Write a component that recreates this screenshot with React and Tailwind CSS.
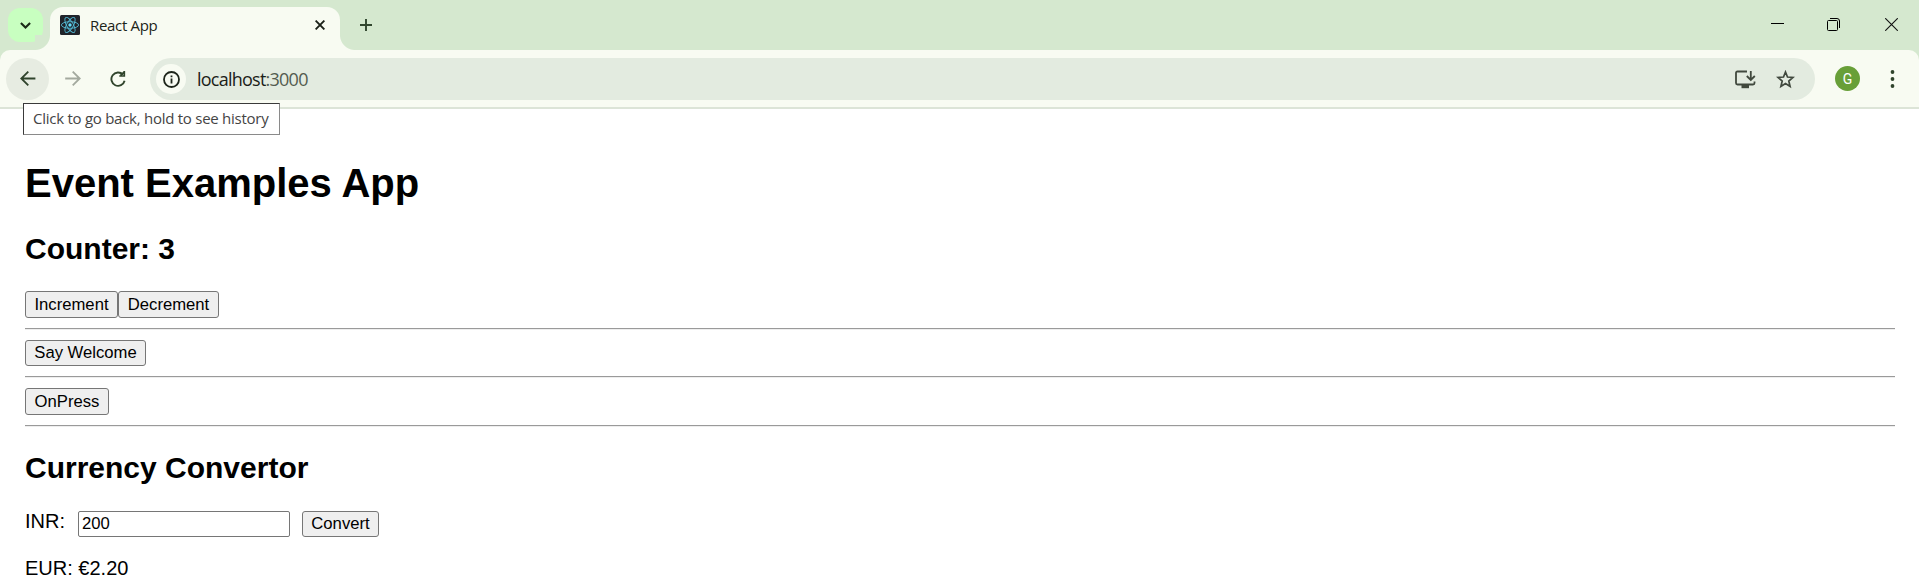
import { useState } from "react";

const btn =
  "box-border rounded-[3px] border border-[#767676] bg-[#efefef] text-center text-[16.667px] leading-[22px] text-black whitespace-nowrap";

function ReactLogo() {
  return (
    <svg className="size-5 shrink-0" viewBox="0 0 20 20" fill="none">
      <rect width="20" height="20" rx="1.5" fill="#20232a" />
      <g stroke="#53bad5" strokeWidth="0.9">
        <ellipse cx="10" cy="10" rx="8.6" ry="3.3" />
        <ellipse cx="10" cy="10" rx="8.6" ry="3.3" transform="rotate(60 10 10)" />
        <ellipse cx="10" cy="10" rx="8.6" ry="3.3" transform="rotate(120 10 10)" />
      </g>
      <circle cx="10" cy="10" r="1.7" fill="#61dafb" />
    </svg>
  );
}

function TabStrip() {
  return (
    <div className="flex h-[50px] items-start bg-[#d5e8cf]">
      <div className="ml-2 mt-2 flex h-[34px] w-[35px] items-center justify-center rounded-[12px] bg-[#c8ffc0]">
        <svg className="size-[11px]" viewBox="0 0 11 11" fill="none" stroke="#1a2b17" strokeWidth="2.1">
          <path d="M0.9 3 L5.5 7.6 L10.1 3" />
        </svg>
      </div>
      <div className="relative ml-[7px] mt-[7px] flex h-[43px] w-[290px] items-center rounded-t-[13px] bg-[#f8fbf2] pl-[10px] pb-[7px]">
        <span className="absolute bottom-0 -left-[15px] size-[15px] bg-[radial-gradient(circle_at_0_0,#d5e8cf_14.5px,#f8fbf2_15.5px)]" />
        <span className="absolute bottom-0 -right-[15px] size-[15px] bg-[radial-gradient(circle_at_100%_0,#d5e8cf_14.5px,#f8fbf2_15.5px)]" />
        <ReactLogo />
        <span className="ml-[10px] -mt-[1px] text-[15px] leading-5 tracking-[-0.32px] text-[#1c2419]">React App</span>
        <svg className="ml-auto mr-[15px] size-[10px]" viewBox="0 0 10 10" stroke="#1a2018" strokeWidth="1.9">
          <path d="M0.6 0.6 L9.4 9.4 M9.4 0.6 L0.6 9.4" />
        </svg>
      </div>
      <svg className="ml-[20px] mt-[19px] size-[12px]" viewBox="0 0 12 12" stroke="#31462e" strokeWidth="1.9">
        <path d="M6 0 V12 M0 6 H12" />
      </svg>
      <div className="ml-auto mr-[21px] mt-[18px] flex items-start">
        <svg className="h-[13px] w-[13px]" viewBox="0 0 13 13" stroke="#000" strokeWidth="1">
          <path d="M0 5.5 H13" />
        </svg>
        <svg className="ml-[43px] size-[13px]" viewBox="0 0 13 13" fill="none" stroke="#000" strokeWidth="1">
          <rect x="0.5" y="2.5" width="10" height="10" rx="1" />
          <path d="M3 0.5 H10 Q12.5 0.5 12.5 3 V10" />
        </svg>
        <svg className="ml-[45px] size-[13px]" viewBox="0 0 13 13" stroke="#111" strokeWidth="1.1">
          <path d="M0.2 0.2 L12.8 12.8 M12.8 0.2 L0.2 12.8" />
        </svg>
      </div>
    </div>
  );
}

function Toolbar() {
  return (
    <div className="bg-[#d5e8cf]">
      <div className="relative flex h-[59px] items-start rounded-t-[10px] border-b-2 border-[#dce4d7] bg-[#f8fbf2] pt-2">
        <div className="ml-[6px] flex h-[42px] w-[43px] shrink-0 items-center justify-center rounded-full bg-[#e7ece2]">
          <svg className="size-4" viewBox="0 0 16 16" fill="none" stroke="#30442c" strokeWidth="1.8">
            <path d="M15.4 7.5 H2 M8.3 0.6 L1.3 7.5 L8.3 14.4" />
          </svg>
        </div>
        <svg className="ml-[16px] mt-[13px] size-4 shrink-0" viewBox="0 0 16 16" fill="none" stroke="#a3a99e" strokeWidth="1.8">
          <path d="M0.2 7.5 H14 M7.7 0.6 L14.7 7.5 L7.7 14.4" />
        </svg>
        <svg className="ml-[29px] mt-[12px] size-[17px] shrink-0" viewBox="0 0 17 17" fill="none">
          <path d="M13 4.6 A6.7 6.7 0 1 0 14.6 10.8" stroke="#30442c" strokeWidth="1.9" />
          <path d="M14.3 1 V6 H9.3 M10.6 5.4 L14 2" stroke="#30442c" strokeWidth="1.7" />
        </svg>
        <div className="ml-[23px] flex h-[42px] w-[1665px] shrink-0 items-center rounded-full bg-[#e3ebe0] pl-[6px]">
          <div className="flex size-[30px] items-center justify-center rounded-full bg-[#f8fbf2]">
            <svg className="size-[17px]" viewBox="0 0 17 17" fill="none" stroke="#1d251a" strokeWidth="1.8">
              <circle cx="8.5" cy="8.5" r="7.5" />
              <path d="M8.5 7.6 V12.5 M8.5 4.5 V6.3" />
            </svg>
          </div>
          <span className="ml-[11px] text-[18px] leading-6 tracking-[-0.76px] text-[#1b2118]">
            localhost<span className="text-[#535b4f]">:3000</span>
          </span>
          <svg className="ml-auto h-[19px] w-[21px]" viewBox="0 0 21 19" fill="none" stroke="#41493e" strokeWidth="1.8">
            <path d="M12 1.5 H2.5 Q1 1.5 1 3 V13 Q1 14.5 2.5 14.5 H18 Q19.5 14.5 19.5 13 V11.5" />
            <path d="M15.8 1 V9.5 M11.8 6 L15.8 10 L19.8 6" />
            <path d="M6.5 16.6 H14" strokeWidth="3.2" />
          </svg>
          <svg className="ml-[20px] mr-[20px] size-[19px]" viewBox="0 0 19 19" fill="none" stroke="#41493e" strokeWidth="1.7">
            <path d="M9.5 2 L11.5 7 L17 7.4 L12.8 11 L14.1 16.5 L9.5 13.6 L4.9 16.5 L6.2 11 L2 7.4 L7.5 7 Z" />
          </svg>
        </div>
        <div className="ml-5 mt-2 flex size-[25px] shrink-0 items-center justify-center rounded-full bg-[#689f38] font-[Roboto] text-[14px] leading-none text-white">
          G
        </div>
        <svg className="ml-[30px] mt-[12px] h-[18px] w-[5px] shrink-0" viewBox="0 0 5 18" fill="#30442c">
          <circle cx="2.5" cy="2" r="1.9" />
          <circle cx="2.5" cy="9" r="1.9" />
          <circle cx="2.5" cy="16" r="1.9" />
        </svg>
        <div className="absolute left-[23px] top-[53px] z-10 h-[32px] w-[257px] border border-[#3a3a3a] border-b-[#8a8a8a] border-r-[#8a8a8a] bg-white pl-[9px] text-[15px] leading-[29px] tracking-[-0.26px] whitespace-nowrap text-[#444]">
          Click to go back, hold to see history
        </div>
      </div>
    </div>
  );
}

function Rule() {
  return (
    <div className="h-[2px] border-t border-b border-t-[#9a9a9a] border-b-[#eeeeee]" />
  );
}

export default function App() {
  const [count, setCount] = useState(3);
  const [inr, setInr] = useState("200");
  const [eur, setEur] = useState("2.20");

  return (
    <div className="h-[579px] w-[1919px] overflow-hidden bg-white font-['Open_Sans','Noto_Sans',sans-serif]">
      <TabStrip />
      <Toolbar />
      <main className="ml-[25px] mr-6 pt-[51px] font-['Liberation_Sans',Arial,sans-serif] text-[20px] leading-[23px] text-black">
        <h1 className="text-[40px] leading-[46px] font-bold">Event Examples App</h1>
        <h2 className="mt-[26px] text-[30px] leading-[34px] font-bold">Counter: {count}</h2>
        <div className="mt-[25px] flex">
          <button className={`${btn} h-[27px] w-[93px]`} onClick={() => setCount(count + 1)}>Increment</button>
          <button className={`${btn} h-[27px] w-[101px]`} onClick={() => setCount(count - 1)}>Decrement</button>
        </div>
        <div className="mt-[10px]"><Rule /></div>
        <div className="mt-[10px] flex">
          <button className={`${btn} h-[26px] w-[121px]`}>Say Welcome</button>
        </div>
        <div className="mt-[10px]"><Rule /></div>
        <div className="mt-[10px] flex">
          <button className={`${btn} h-[27px] w-[84px]`}>OnPress</button>
        </div>
        <div className="mt-[10px]"><Rule /></div>
        <h2 className="mt-[24px] text-[30px] leading-[34px] font-bold">Currency Convertor</h2>
        <form
          className="mt-[26px] flex h-[26px] items-start"
          onSubmit={(e) => {
            e.preventDefault();
            setEur((Number(inr) * 0.011).toFixed(2));
          }}
        >
          <label className="flex">
            <span className="-mt-px w-[53px]">INR:</span>
            <input
              className="h-[26px] w-[212px] rounded-[2px] border border-[#767676] bg-white px-[3px] text-[16.667px] leading-[20px]"
              value={inr}
              onChange={(e) => setInr(e.target.value)}
            />
          </label>
          <button className={`${btn} ml-3 h-[26px] w-[77px]`}>Convert</button>
        </form>
        <p className="mt-[20px] whitespace-nowrap">EUR: €{eur}</p>
      </main>
    </div>
  );
}
